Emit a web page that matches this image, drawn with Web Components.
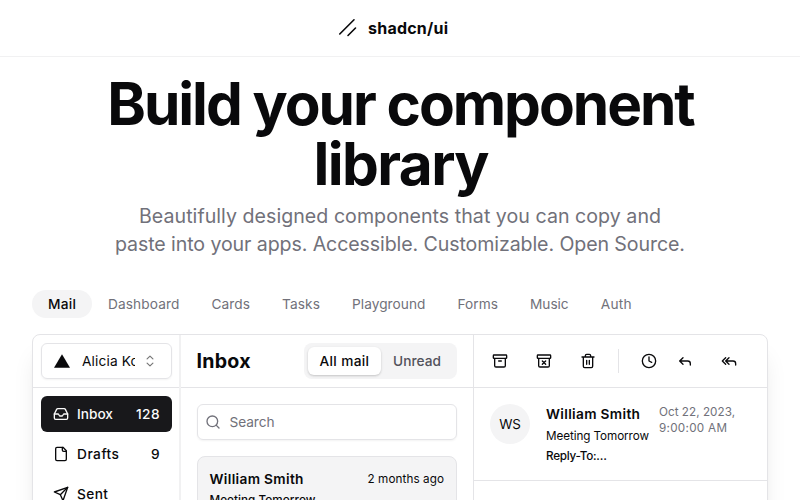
<!DOCTYPE html>
<html lang="en"><head><meta charset="utf-8"><title>shadcn/ui</title>
<style>
html,body{margin:0;height:500px;overflow:hidden;background:#fff;color:#09090b;font:400 13.7px/20px Inter,"Liberation Sans",sans-serif}
</style></head><body>
<site-page></site-page>
<script>
const ICONS={
 logo:'<path d="M19.5 12 12 19.5M18 3.75 3.75 18" stroke-width="1.6"/>',
 archive:'<rect x="2" y="3" width="20" height="5" rx="1"/><path d="M4 8v11a2 2 0 0 0 2 2h12a2 2 0 0 0 2-2V8M10 12h4"/>',
 archivex:'<rect x="2" y="3" width="20" height="5" rx="1"/><path d="M4 8v11a2 2 0 0 0 2 2h12a2 2 0 0 0 2-2V8M9.5 17l5-5M9.5 12l5 5"/>',
 trash:'<path d="M3 6h18M19 6v14c0 1-1 2-2 2H7c-1 0-2-1-2-2V6M8 6V4c0-1 1-2 2-2h4c1 0 2 1 2 2v2M10 11v6M14 11v6"/>',
 clock:'<circle cx="12" cy="12" r="10"/><path d="M12 6v6l4 2"/>',
 reply:'<path d="M9 17l-5-5 5-5M20 18v-2a4 4 0 0 0-4-4H4"/>',
 replyall:'<path d="M7 17l-5-5 5-5M12 17l-5-5 5-5M22 18v-2a4 4 0 0 0-4-4H7"/>',
 inbox:'<path d="M22 12h-6l-2 3h-4l-2-3H2"/><path d="M5.45 5.11 2 12v6a2 2 0 0 0 2 2h16a2 2 0 0 0 2-2v-6l-3.45-6.89A2 2 0 0 0 16.76 4H7.24a2 2 0 0 0-1.79 1.11z"/>',
 file:'<path d="M15 2H6a2 2 0 0 0-2 2v16a2 2 0 0 0 2 2h12a2 2 0 0 0 2-2V7Z"/><path d="M14 2v4a2 2 0 0 0 2 2h4"/>',
 send:'<path d="m22 2-7 20-4-9-9-4Z"/><path d="M22 2 11 13"/>',
 search:'<circle cx="11" cy="11" r="8"/><path d="m21 21-4.3-4.3"/>',
 triangle:'<path d="M12 2 24 22H0Z" fill="currentColor" stroke="none"/>',
 updown:'<path d="m7 8.5 5-5 5 5M7 15.5l5 5 5-5"/>'
};
function define(name,css,html,setup){
 const t=document.createElement('template');
 t.innerHTML='<style>:host{box-sizing:border-box}'+css+'</style>'+html;
 customElements.define(name,class extends HTMLElement{
  connectedCallback(){
   if(this.shadowRoot)return;
   this.attachShadow({mode:'open'}).append(t.content.cloneNode(true));
   if(setup)setup(this,this.shadowRoot);
  }
 });
}
/* A single line of text, tracked so that it fills the width given in "w". */
const lines=[];
define('ui-text',':host{display:block;flex:none;white-space:nowrap}','<span><slot></slot></span>',(h,r)=>{h.style.width=h.getAttribute('w')+'px';lines.push([h,r.querySelector('span')])});
define('ui-icon',':host{display:block;flex:none;width:var(--size,16px);height:var(--size,16px)}svg{display:block;width:100%;height:100%;overflow:visible}',
 '<svg viewBox="0 0 24 24" fill="none" stroke="currentColor" stroke-width="2" stroke-linecap="round" stroke-linejoin="round"></svg>',
 (h,r)=>{r.querySelector('svg').innerHTML=ICONS[h.getAttribute('name')]});

define('site-header',':host{display:flex;height:57px;border-bottom:1px solid #f1f1f2;padding-left:336px;align-items:center;gap:8px;font-size:16px;font-weight:700}ui-icon{--size:24px}',
 '<ui-icon name="logo"></ui-icon><ui-text w="80">shadcn/ui</ui-text>');
define('page-hero',':host{display:flex;flex-direction:column;align-items:center;padding-top:17px}h1{margin:0;padding-left:3px;font:inherit;font-size:58.5px;font-weight:700;line-height:60px;display:flex;flex-direction:column;align-items:center}p{margin:8px 0 0;font-size:19.6px;line-height:28px;color:#71717a;display:flex;flex-direction:column;align-items:center}',
 '<h1><ui-text w="588.5">Build your component</ui-text><ui-text w="176">library</ui-text></h1><p><ui-text w="522">Beautifully designed components that you can copy and</ui-text><ui-text w="570">paste into your apps. Accessible. Customizable. Open Source.</ui-text></p>');
define('nav-tab',':host{display:flex;height:28px;align-items:center;padding:0 16px;border-radius:14px;color:#71717a}:host([active]){background:#f4f4f5;color:#09090b;font-weight:500}','<slot></slot>');
define('tab-nav',':host{display:flex;margin:32px 0 16px 32px}',
 '<nav-tab active><ui-text w="28">Mail</ui-text></nav-tab>'+[['Dashboard',71.4],['Cards',38.6],['Tasks',38],['Playground',73.5],['Forms',40.5],['Music',38.7],['Auth',31]].map(a=>`<nav-tab><ui-text w="${a[1]}">${a[0]}</ui-text></nav-tab>`).join(''));

define('account-switcher',':host{display:flex;align-items:center;height:36px;width:130.5px;border:1px solid #e4e4e7;border-radius:6px;padding:0 12px;box-shadow:0 1px 2px #0000000d}.name{width:53px;margin-left:12px;overflow:hidden}.chev{--size:14px;margin-left:8px;color:#777}',
 '<ui-icon name="triangle"></ui-icon><div class="name"><ui-text w="73">Alicia Koch</ui-text></div><ui-icon class="chev" name="updown"></ui-icon>');
define('nav-item',':host{display:flex;align-items:center;height:36px;width:130.5px;padding:0 12px;border-radius:6px;font-weight:500}:host([active]){background:#18181b;color:#fafafa}ui-icon{margin-right:8px}.badge{margin-left:auto}',
 '<ui-icon></ui-icon><slot></slot><div class="badge"><slot name="badge"></slot></div>',
 (h,r)=>{const i=r.querySelector('ui-icon');i.shadowRoot.querySelector('svg').innerHTML=ICONS[h.getAttribute('icon')]});
define('mail-sidebar',':host{display:block;border-right:2px solid #f1f1f2}.top{height:53px;border-bottom:1px solid #e4e4e7;padding:8px 0 8px 8px;box-sizing:border-box}nav{display:flex;flex-direction:column;gap:4px;padding:8px 0 8px 8px}',
 '<div class="top"><account-switcher></account-switcher></div><nav><nav-item icon="inbox" active><ui-text w="36">Inbox</ui-text><ui-text slot="badge" w="23.5">128</ui-text></nav-item><nav-item icon="file"><ui-text w="42">Drafts</ui-text><ui-text slot="badge" w="8.5">9</ui-text></nav-item><nav-item icon="send"><ui-text w="31">Sent</ui-text></nav-item></nav>');

define('view-toggle',':host{display:flex;align-items:center;height:36px;padding:4px;border-radius:8px;background:#f4f4f5;color:#52525b;font-weight:500}div{height:28px;padding:4px 12px;box-sizing:border-box;border-radius:6px}.on{background:#fff;color:#09090b;box-shadow:0 1px 3px #0000001a,0 1px 2px #0000001a}',
 '<div class="on"><ui-text w="49.5">All mail</ui-text></div><div><ui-text w="48">Unread</ui-text></div>');
define('search-field',':host{display:flex;align-items:center;height:36px;border:1px solid #e4e4e7;border-radius:6px;padding:0 7px;gap:9px;color:#71717a;box-shadow:0 1px 2px #0000000d}','<ui-icon name="search"></ui-icon><ui-text w="45">Search</ui-text>');
define('mail-card',':host{display:block;height:120px;border:1px solid #e4e4e7;border-radius:8px;background:#f4f4f5;padding:12px}.row{display:flex;justify-content:space-between;align-items:center;font-size:11.7px}.from{font-size:13.7px;font-weight:600}.sub{font-size:11.7px;font-weight:500;line-height:16px;margin-top:3px}',
 '<div class="row"><ui-text class="from" w="94">William Smith</ui-text><ui-text w="76.5">2 months ago</ui-text></div><ui-text class="sub" w="106">Meeting Tomorrow</ui-text>');
define('mail-list',':host{display:block}.top{display:flex;align-items:center;justify-content:space-between;height:53px;border-bottom:1px solid #e4e4e7;padding:0 16px 0 15.5px;box-sizing:border-box}.title{font-size:19.6px;font-weight:700}.body{display:flex;flex-direction:column;gap:16px;padding:16px 16px 0 15.5px}',
 '<div class="top"><ui-text class="title" w="54">Inbox</ui-text><view-toggle></view-toggle></div><div class="body"><search-field></search-field><mail-card></mail-card></div>');
define('tool-button',':host{display:grid;place-items:center;width:36px;height:36px}','<slot></slot>');
define('mail-toolbar',':host{display:flex;align-items:center;height:53px;border-bottom:1px solid #e4e4e7;padding-left:8px}.g{display:flex;gap:8px}.sep{width:1px;height:24px;background:#e4e4e7;margin:0 12px}.gap{width:8px}',
 '<div class="g">'+['archive','archivex','trash'].map(i=>`<tool-button><ui-icon name="${i}"></ui-icon></tool-button>`).join('')+'</div><div class="sep"></div><tool-button><ui-icon name="clock"></ui-icon></tool-button><tool-button><ui-icon name="reply"></ui-icon></tool-button><div class="gap"></div><tool-button><ui-icon name="replyall"></ui-icon></tool-button>');
define('mail-message',':host{display:flex;height:93px;padding:16px;border-bottom:1px solid #e4e4e7;font-size:11.7px;line-height:16px}.av{display:grid;place-items:center;width:40px;height:40px;border-radius:50%;background:#f4f4f5;font-size:13.4px;margin-right:16px}.who{display:flex;flex-direction:column;gap:4px;width:103px}.name{font-size:13.7px;font-weight:600;line-height:20px}.reply{font-weight:500}.date{margin-left:10px;color:#71717a}',
 '<div class="av"><ui-text w="21.5">WS</ui-text></div><div class="who"><ui-text class="name" w="94">William Smith</ui-text><ui-text w="103">Meeting Tomorrow</ui-text><ui-text class="reply" w="61">Reply-To:…</ui-text></div><div class="date"><ui-text w="76">Oct 22, 2023,</ui-text><ui-text w="68">9:00:00 AM</ui-text></div>');
define('mail-detail',':host{display:block;border-left:1px solid #e4e4e7}','<mail-toolbar></mail-toolbar><mail-message></mail-message>');
define('mail-app',':host{display:grid;grid-template-columns:148px 292px 1fr;margin:0 32px;height:600px;border:1px solid #e4e4e7;border-radius:8px;background:#fff;box-shadow:0 20px 25px -5px #0000001a,0 8px 10px -6px #0000001a}','<mail-sidebar></mail-sidebar><mail-list></mail-list><mail-detail></mail-detail>');
define('site-page',':host{display:block;height:500px;overflow:hidden}','<site-header></site-header><page-hero></page-hero><tab-nav></tab-nav><mail-app></mail-app>');

for(const [host,span] of lines){
 const n=[...host.textContent].length,w=+host.getAttribute('w');
 if(n>1)host.style.letterSpacing=(w-span.getBoundingClientRect().width)/(n-1)+'px';
}
</script></body></html>
